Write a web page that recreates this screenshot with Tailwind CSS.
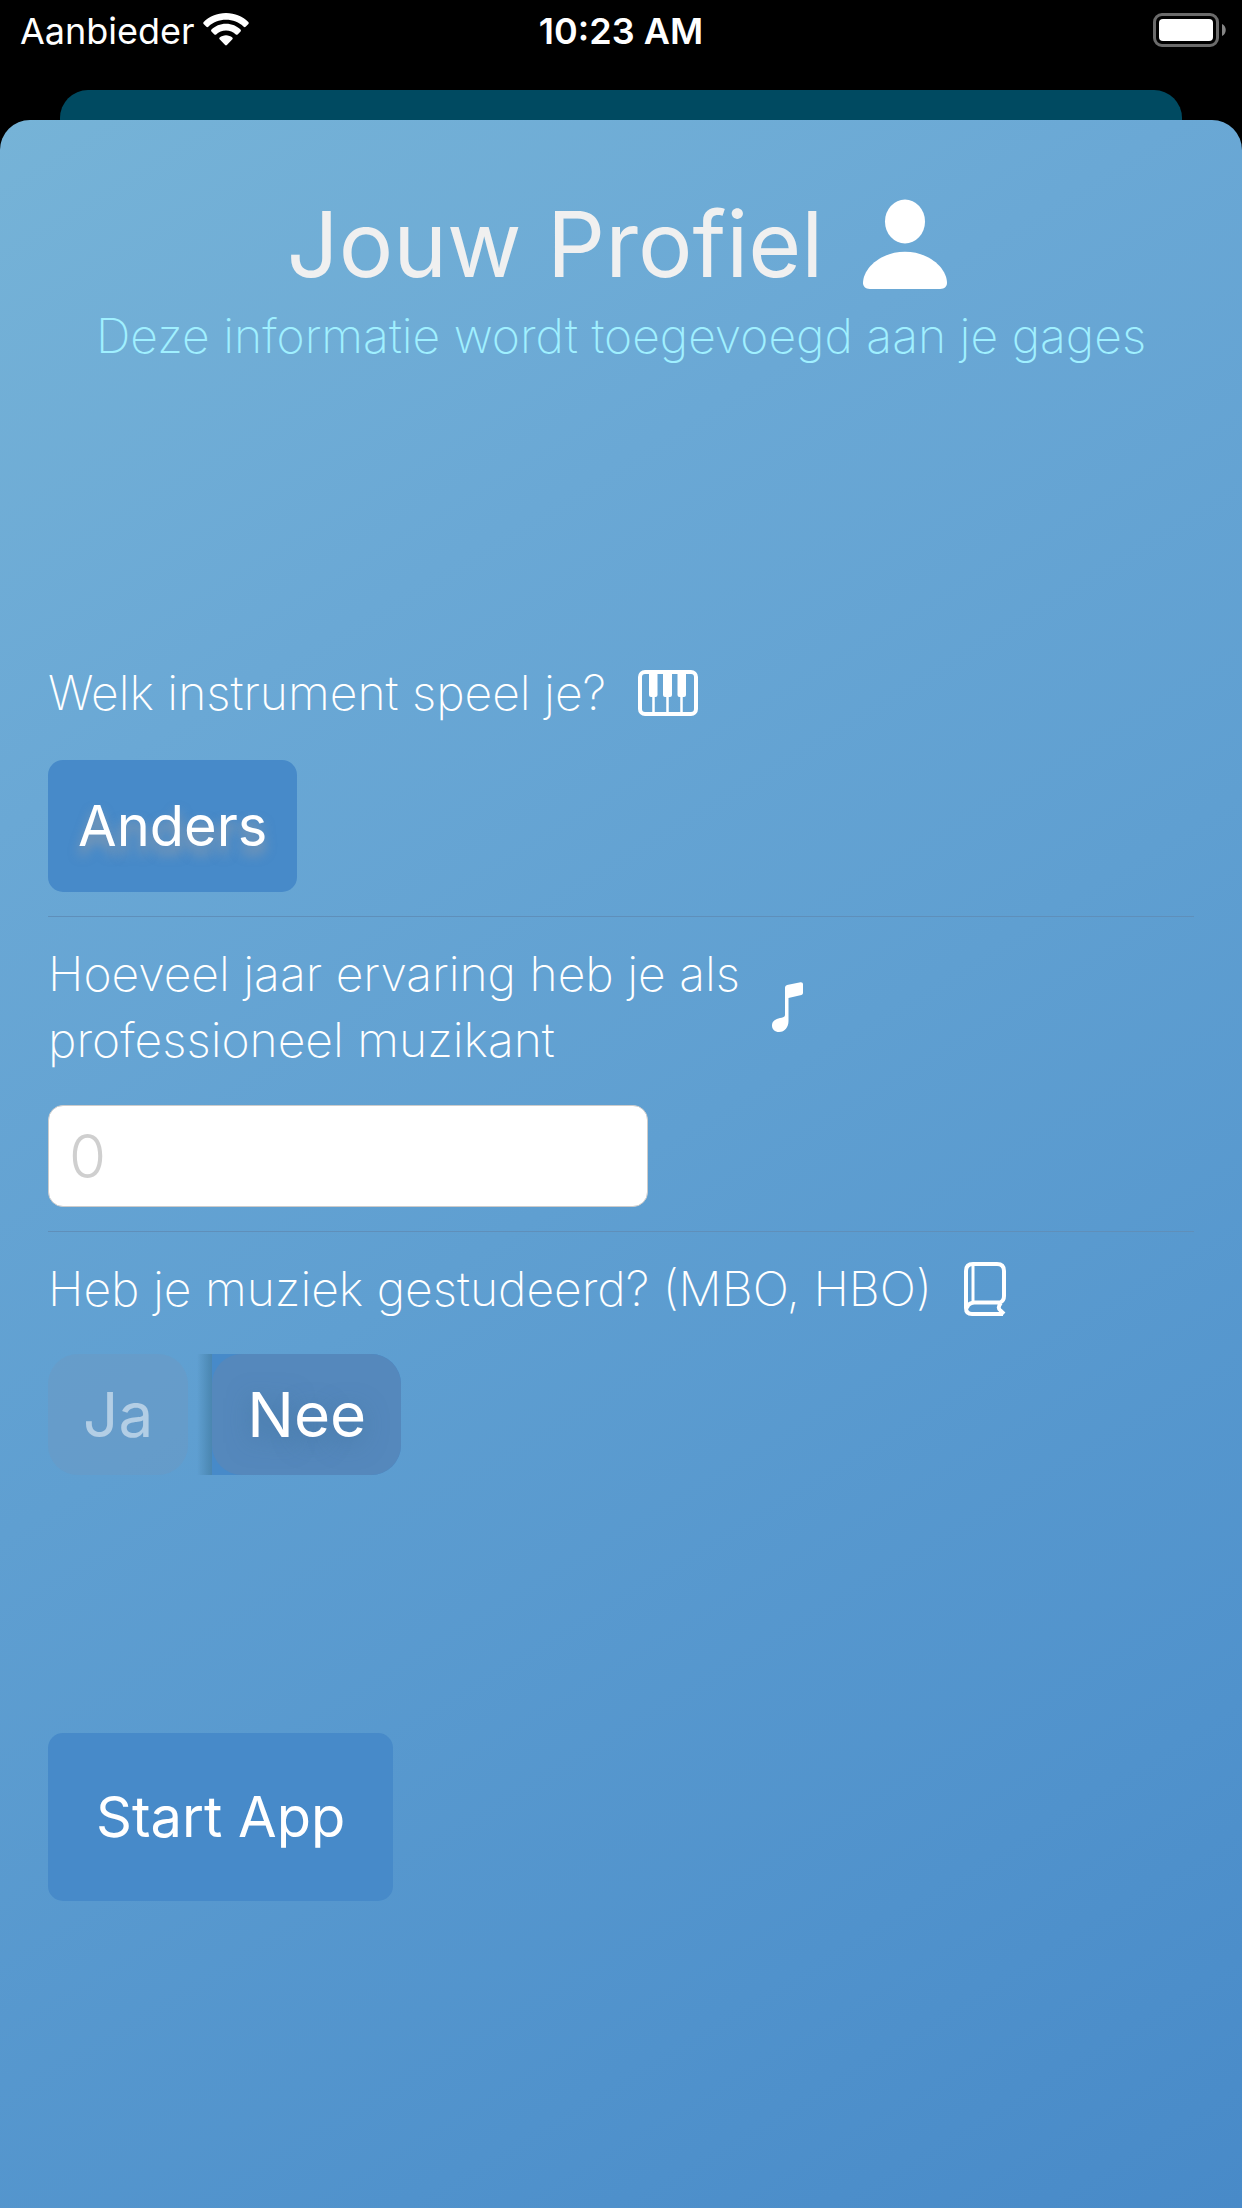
<!DOCTYPE html>
<html lang="nl">
<head>
<meta charset="utf-8">
<meta name="viewport" content="width=device-width, initial-scale=1">
<title>Jouw Profiel</title>
<script src="https://cdn.jsdelivr.net/npm/@tailwindcss/browser@4"></script>
</head>
<body class="flex min-h-screen flex-col bg-black font-['Inter',sans-serif] text-white">
  <header class="grid h-[90px] grid-cols-3 items-start px-5 pt-3 text-[36px] leading-[38px]">
    <div class="flex items-start gap-2">
      <span>Aanbieder</span>
      <svg class="h-[34px] w-[46px]" viewBox="0 0 46 34" fill="#fff" aria-label="Wifi">
        <path d="M23 1C32 1 40 4.500 45.300 10c.6.6.6 1.300.1 1.900l-2.800 2.800c-.6.6-1.300.6-1.900 0C36 10.300 29.800 7.800 23 7.800S10 10.300 5.300 14.700c-.6.6-1.300.6-1.900 0L.6 11.900c-.5-.6-.5-1.300.1-1.900C6 4.500 14 1 23 1z"/>
        <path d="M23 11.800c5.900 0 10.900 2.300 14.500 5.800.6.6.6 1.200.1 1.800l-3 3c-.6.6-1.200.6-1.800 0-2.600-2.400-6-3.900-9.800-3.900s-7.200 1.500-9.800 3.900c-.6.6-1.200.6-1.800 0l-3-3c-.5-.6-.5-1.200.1-1.800 3.600-3.500 8.600-5.800 14.500-5.800z"/>
        <path d="M23 23.300c2.400 0 4.600.9 6.300 2.300.6.500.6 1.200.1 1.700l-5.500 5.700c-.6.600-1.200.6-1.800 0l-5.500-5.700c-.5-.5-.5-1.200.1-1.700 1.700-1.400 3.900-2.300 6.300-2.300z"/>
      </svg>
    </div>
    <time class="text-center font-semibold">10:23 AM</time>
    <svg class="mt-px h-[34px] w-[73px] justify-self-end -mr-1" viewBox="0 0 73 34" aria-label="Batterij">
      <rect x="1.500" y="1.500" width="63" height="31" rx="7.500" fill="none" stroke="#6b6b6b" stroke-width="3"/>
      <rect x="6" y="6" width="54" height="22" rx="4" fill="#fff"/>
      <path d="M69 11c5 2 5 10 0 12z" fill="#858585"/>
    </svg>
  </header>

  <div class="mx-[60px] h-[30px] rounded-t-[28px] bg-[#004a61]"></div>

  <main class="flex flex-1 flex-col rounded-t-[30px] bg-linear-[149deg,#76b3d7,#6aa8d5_25%,#5f9fd1_50%,#5092cc_82%,#488ac8] pt-[74px]">
    <div class="flex items-center justify-center gap-10 pr-2">
      <h1 class="text-[91px] leading-[100px] text-[#f0f0f0]">Jouw Profiel</h1>
      <svg class="h-[90px] w-[84px]" viewBox="0 0 86 92" fill="#fff" aria-hidden="true">
        <ellipse cx="43" cy="23" rx="20.500" ry="22.500"/>
        <path d="M43 54c25 0 43 17 43 32 0 3.500-2.500 6-7 6H7c-4.500 0-7-2.500-7-6 0-15 18-32 43-32z"/>
      </svg>
    </div>
    <p class="mt-[10px] text-center text-[48px] font-extralight leading-[64px] text-[#a0f0ff]">Deze informatie wordt toegevoegd aan je gages</p>

    <form class="mt-[292px] px-12 text-[48px] font-extralight leading-[66px]">
      <section class="border-b border-[#5f8fba] pb-6">
        <div class="flex items-center gap-8">
          <label for="instrument">Welk instrument speel je?</label>
          <svg class="h-[46px] w-[60px]" viewBox="0 0 60 46" aria-hidden="true">
            <rect x="2" y="2" width="56" height="42" rx="5" fill="none" stroke="#fff" stroke-width="4"/>
            <path d="M11 3h8.500v22q0 2-2 2h-4.500q-2 0-2-2zM25 3h9v22q0 2-2 2h-5q-2 0-2-2zM39.500 3H48v22q0 2-2 2h-4.500q-2 0-2-2z" fill="#fff"/>
            <path d="M15.500 26v17M29.500 26v17M43.500 26v17" stroke="#fff" stroke-width="2.500"/>
          </svg>
        </div>
        <button id="instrument" type="button" class="mt-[34px] h-[132px] rounded-[15px] bg-[#478ac9] px-[30px] text-[56px] font-normal text-shadow-[0_8px_12px_rgb(175_165_160/0.7)]">Anders</button>
      </section>

      <section class="border-b border-[#5f8fba] pt-6 pb-6">
        <div class="flex items-center gap-8">
          <label for="ervaring">Hoeveel jaar ervaring heb je als<br>professioneel muzikant</label>
          <svg class="h-[50px] w-[32px]" viewBox="0 0 32 50" fill="#fff" aria-hidden="true">
            <path d="M13 5.500q0-2 2-2.500L28.500.2Q31 0 31 2v9q0 1.600-1.600 2L16.500 16v23c0 6-3.500 11-9.500 11-4 0-7-2.500-7-6.500 0-4.500 3.500-6.500 8-7.500 3-.6 5-.8 5-3z"/>
          </svg>
        </div>
        <input id="ervaring" type="text" inputmode="numeric" placeholder="0" class="mt-8 block h-[102px] w-[600px] max-w-full rounded-[15px] border border-[#ccc] bg-white px-[20px] text-[60px] font-light text-gray-800 placeholder:text-[#cfcfcf]">
      </section>

      <fieldset class="pt-6">
        <legend class="float-left flex w-full items-center gap-8">
          <span>Heb je muziek gestudeerd? (MBO, HBO)</span>
          <svg class="h-[54px] w-[42px]" viewBox="0 0 42 54" fill="none" stroke="#fff" stroke-width="4" aria-hidden="true">
            <path d="M39 52H8q-6 0-6-6V9q0-7 7-7h24q7 0 7 7v25q0 5-4 6.500H10q-7 1-7 6"/>
            <path d="M9 3v37" stroke-width="3"/>
            <path d="M37 41c-3 3-3 6 0 8l3 3"/>
          </svg>
        </legend>
        <div class="clear-both flex gap-6 pt-8 text-[62px] font-normal leading-[121px]">
          <label class="rounded-[30px] bg-[#7595b8]/30 px-[35px] text-white/50"><input class="sr-only" type="radio" name="studie" value="ja">Ja</label>
          <label class="relative rounded-r-[30px] bg-[#478ac9] before:absolute before:inset-y-0 before:right-full before:w-[15px] before:bg-linear-to-l before:from-[#4a86b0] before:to-transparent"><input class="sr-only" type="radio" name="studie" value="nee" checked><span class="block rounded-[30px] bg-[#5588bc] px-[35px] text-shadow-[0_6px_24px_rgb(60_110_150/0.6)]">Nee</span></label>
        </div>
      </fieldset>

      <button type="submit" class="mt-[258px] h-[168px] rounded-[15px] bg-[#478ac9] px-12 text-[56px] font-normal">Start App</button>
    </form>
  </main>
</body>
</html>
